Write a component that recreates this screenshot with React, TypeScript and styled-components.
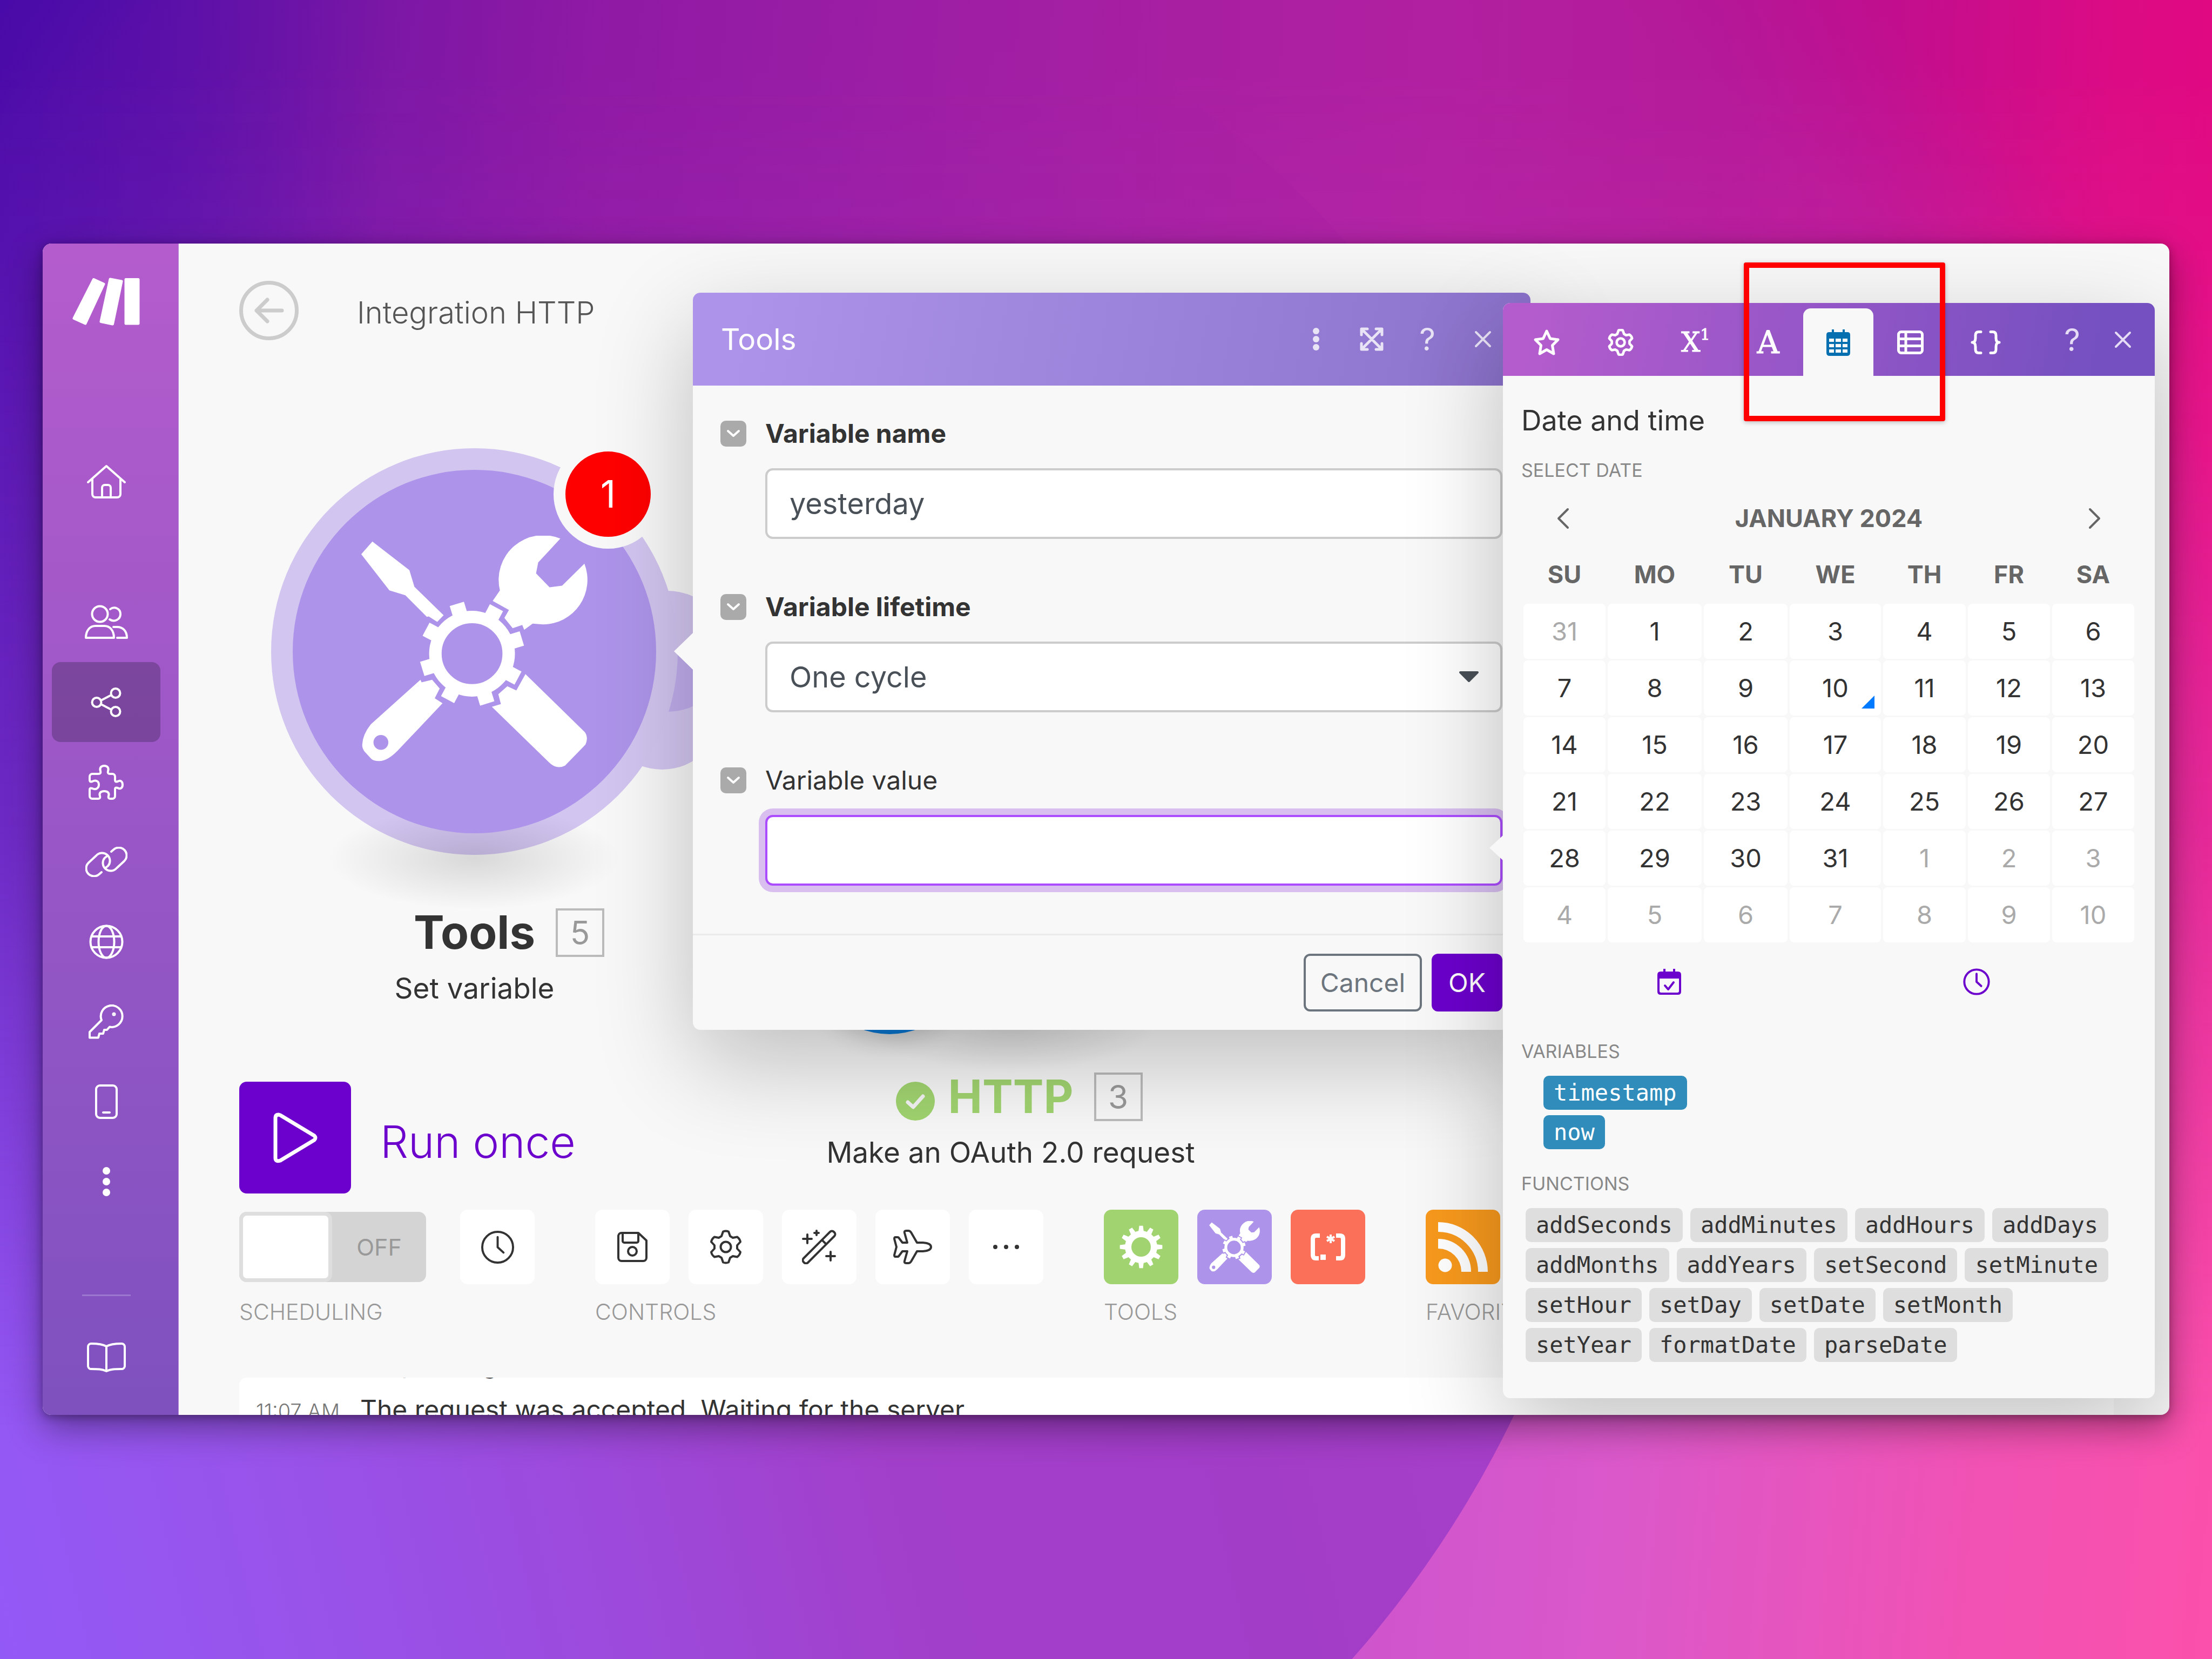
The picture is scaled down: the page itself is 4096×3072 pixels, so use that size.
import React from "react";
import styled, { createGlobalStyle, css } from "styled-components";

const sans = `Inter, "Liberation Sans", sans-serif`;
const mono = `"DejaVu Sans Mono", "Liberation Mono", monospace`;
const slab = `"DejaVu Serif", "Liberation Serif", serif`;

const color = {
  surface: "#f8f8f8",
  ink: "#333333",
  muted: "#999999",
  caption: "#888888",
  brand: "#6c00cc",
  lilac: "#ad94ea",
  line: "#cccccc",
};

const GlobalStyle = createGlobalStyle`
  *, *::before, *::after { box-sizing: border-box; }
  body { margin: 0; font-family: ${sans}; color: ${color.ink}; }
  button, input, select { font: inherit; color: inherit; margin: 0; }
  svg { display: block; flex: none; }
`;

/* ---------- page and window ---------- */

const Page = styled.div`
  position: relative;
  isolation: isolate;
  overflow: hidden;
  display: flex;
  height: 100vh;
  padding: 451px 79px 452px;
  background: linear-gradient(95deg, #c853cf 58%, #da58ca 74%, #f052b4 89%, #fb50ab 100%);

  &::before {
    content: "";
    position: absolute;
    inset: 0;
    z-index: -2;
    clip-path: circle(48.1vw at 25.1% 57.5%);
    background: linear-gradient(77deg, #9359f6 0%, #9853ea 12%, #9c4adc 24%, #a23fca 36%, #a23dc8 50%, #a83fc9 66%);
  }

  &::after {
    content: "";
    position: absolute;
    inset: 0;
    z-index: -1;
    background:
      linear-gradient(92deg, rgba(68, 9, 168, 0.7) 0%, transparent 17%),
      radial-gradient(circle at 40% 64.6%, rgba(178, 42, 168, 0.4) 0, rgba(178, 42, 168, 0.3) 58vw, transparent 66vw),
      linear-gradient(93deg, #4409a8 0%, #4a0ba8 8%, #600ea4 16%, #7f12a2 26%, #8c17a3 36%, #a31a9f 51%, #b01b9c 63%, #b51393 75%, #c00e8e 82%, #db0b84 92%, #e4077f 100%);
    mask-image: linear-gradient(#000 4%, rgba(0, 0, 0, 0.88) 20%, rgba(0, 0, 0, 0.6) 50%, transparent 86%);
  }
`;

const AppWindow = styled.div`
  position: relative;
  flex: 1;
  min-width: 0;
  display: grid;
  grid-template-columns: 252px 1fr;
  overflow: hidden;
  border-radius: 16px;
  background: ${color.surface};
  box-shadow: 0 24px 64px rgba(0, 0, 0, 0.38), 0 4px 16px rgba(0, 0, 0, 0.3);
`;

/* ---------- sidebar ---------- */

const Sidebar = styled.nav`
  display: flex;
  flex-direction: column;
  padding: 63px 33px 32px 17px;
  border-right: 1px solid #b78ad9;
  background: linear-gradient(#b45ccd, #7e51bf);
  color: #ffffff;
`;

const LogoLink = styled.a`
  align-self: flex-start;
  margin-left: 38px;
  color: #ffffff;
`;

const NavLink = styled.a<{ $active?: boolean; $before?: string }>`
  display: flex;
  align-items: center;
  justify-content: center;
  height: 148px;
  margin-top: ${(p) => p.$before ?? "0"};
  border-radius: 16px;
  color: #ffffff;
  background: ${(p) => (p.$active ? "rgba(40, 30, 60, 0.3)" : "transparent")};
`;

const NavRule = styled.hr`
  width: 90px;
  margin: auto auto 40px;
  border: 0;
  border-top: 3px solid #9d78d0;
`;

/* ---------- workspace ---------- */

const Workspace = styled.main`
  position: relative;
  min-width: 0;
  display: flex;
  flex-direction: column;
  padding: 69px 103px 0 112px;
`;

const TitleBar = styled.header`
  position: relative;
  display: flex;
  align-items: center;
  gap: 108px;
`;

const BackButton = styled.button`
  display: flex;
  align-items: center;
  justify-content: center;
  width: 110px;
  height: 110px;
  padding: 0;
  border: 7px solid ${color.line};
  border-radius: 50%;
  background: none;
  color: ${color.line};
`;

const ScenarioTitle = styled.h1`
  margin: 0;
  padding-top: 8px;
  font-size: 56px;
  line-height: 64px;
  font-weight: 300;
  color: #555555;
`;

const Canvas = styled.div`
  position: absolute;
  inset: 0;
`;

const Node = styled.section<{ $x: number; $y: number }>`
  position: absolute;
  left: ${(p) => p.$x}px;
  top: ${(p) => p.$y}px;
  width: 753px;
`;

const Bubble = styled.div<{ $ring: string }>`
  position: relative;
  display: flex;
  align-items: center;
  justify-content: center;
  height: 753px;
  border-radius: 50%;
  background: ${(p) => p.$ring};

  &::before {
    content: "";
    position: absolute;
    left: 106px;
    bottom: -101px;
    width: 540px;
    height: 190px;
    background: radial-gradient(closest-side, rgba(0, 0, 0, 0.13), rgba(0, 0, 0, 0.07) 45%, transparent);
  }
`;

const BubbleCore = styled.div<{ $tint: string }>`
  position: relative;
  display: flex;
  align-items: center;
  justify-content: center;
  width: 673px;
  height: 673px;
  border-radius: 50%;
  background: ${(p) => p.$tint};
  color: #ffffff;
`;

const Lobe = styled.span<{ $x: number; $y: number }>`
  position: absolute;
  left: ${(p) => p.$x}px;
  top: ${(p) => p.$y}px;
  width: 224px;
  height: 224px;
  border-radius: 50%;
  background: rgba(173, 148, 234, 0.5);
`;

const Counter = styled.span`
  position: absolute;
  right: 28px;
  top: -16px;
  display: flex;
  align-items: center;
  justify-content: center;
  width: 202px;
  height: 202px;
  border: 22px solid ${color.surface};
  border-radius: 50%;
  background: #ff0000;
  color: #ffffff;
  font-size: 70px;
  line-height: 84px;
`;

const SmallBubble = styled.span`
  position: absolute;
  left: 2px;
  bottom: -28px;
  width: 300px;
  height: 300px;
  border-radius: 50%;
  background: #0a78d4;
  box-shadow: 0 12px 40px rgba(0, 0, 0, 0.16);
`;

const NodeTitle = styled.div`
  display: grid;
  grid-template-columns: 1fr auto 1fr;
  align-items: center;
  margin-top: 94px;
`;

const NodeName = styled.h2<{ $done?: boolean }>`
  margin: 0;
  font-size: 85px;
  line-height: 100px;
  font-weight: 700;
  color: ${(p) => (p.$done ? "#a1d470" : color.ink)};
`;

const NodeStatus = styled.span`
  justify-self: end;
  margin: 16px 24px 0 0;
`;

const NodeNumber = styled.span`
  display: flex;
  align-items: center;
  justify-content: center;
  width: 90px;
  height: 90px;
  margin-left: 38px;
  border: 4px solid #bbbbbb;
  color: ${color.muted};
  font-size: 60px;
  line-height: 72px;
`;

const NodeCaption = styled.p`
  margin: 21px 0 0;
  text-align: center;
  font-size: 53px;
  line-height: 64px;
`;

/* ---------- bottom controls ---------- */

const Controls = styled.div`
  position: relative;
  margin-top: auto;
`;

const RunButton = styled.button`
  display: flex;
  align-items: center;
  gap: 54px;
  padding: 0;
  border: 0;
  background: none;
  color: ${color.brand};
  font-size: 82px;
  line-height: 100px;
  font-weight: 300;
`;

const RunIcon = styled.span`
  display: flex;
  align-items: center;
  justify-content: center;
  width: 207px;
  height: 207px;
  border-radius: 14px;
  background: ${color.brand};
  color: #ffffff;
`;

const RunLabel = styled.span`
  padding-top: 16px;
`;

const Toolbar = styled.div`
  display: flex;
  gap: 112px;
  margin-top: 30px;
`;

const ToolGroup = styled.div`
  display: grid;
  gap: 27px;
`;

const ToolRow = styled.div<{ $gap?: number }>`
  display: flex;
  align-items: center;
  gap: ${(p) => p.$gap ?? 35}px;
  height: 138px;
`;

const ToolCaption = styled.span`
  font-size: 41px;
  line-height: 48px;
  font-weight: 300;
  color: ${color.muted};
`;

const Tile = styled.button<{ $tint?: string }>`
  display: flex;
  align-items: center;
  justify-content: center;
  flex: none;
  width: 138px;
  height: 138px;
  padding: 0;
  border: 0;
  border-radius: 14px;
  background: ${(p) => p.$tint ?? "#ffffff"};
  color: ${(p) => (p.$tint ? "#ffffff" : color.ink)};
`;

const Switch = styled.label`
  display: flex;
  align-items: center;
  width: 346px;
  height: 130px;
  border-radius: 14px;
  background: #d4d4d4;
  color: ${color.muted};
  font-size: 43px;
  line-height: 52px;
`;

const SwitchInput = styled.input`
  appearance: none;
  width: 172px;
  height: 130px;
  border: 7px solid #dedede;
  border-radius: 14px;
  background: #ffffff;
`;

const SwitchText = styled.span`
  flex: 1;
  text-align: center;
`;

const Log = styled.ul`
  position: relative;
  height: 69px;
  margin: 98px 0 0;
  padding: 0 31px;
  overflow: hidden;
  list-style: none;
  border-radius: 14px 14px 0 0;
  background: #ffffff;
`;

const LogList = styled.div`
  display: flex;
  flex-direction: column;
  margin-top: -54px;
`;

const LogLine = styled.li`
  display: grid;
  grid-template-columns: 156px 1fr;
  align-items: baseline;
  gap: 37px;
  height: 85px;
  font-size: 48px;
  line-height: 56px;
`;

const LogTime = styled.time`
  font-size: 38px;
  font-weight: 300;
  color: #777777;
  white-space: nowrap;
`;

/* ---------- shared floating panel ---------- */

const floating = css`
  position: absolute;
  border-radius: 14px;
  background: ${color.surface};
  box-shadow: 0 60px 180px rgba(0, 0, 0, 0.24);
`;

const Pointer = styled.span<{ $top: number; $w: number; $h: number }>`
  position: absolute;
  right: 100%;
  top: ${(p) => p.$top}px;
  width: ${(p) => p.$w}px;
  height: ${(p) => p.$h}px;
  background: ${color.surface};
  clip-path: polygon(100% 0, 0 50%, 100% 100%);
`;

const IconButton = styled.button`
  display: flex;
  align-items: center;
  justify-content: center;
  width: 60px;
  height: 60px;
  padding: 0;
  border: 0;
  background: none;
  font-size: 58px;
  line-height: 60px;
  font-weight: 400;
`;

/* ---------- module dialog ---------- */

const Dialog = styled.form`
  ${floating}
  left: 1204px;
  top: 91px;
  width: 1551px;
`;

const DialogHeader = styled.header`
  display: flex;
  align-items: center;
  justify-content: space-between;
  height: 172px;
  padding: 0 58px 0 52px;
  border-radius: 14px 14px 0 0;
  background: linear-gradient(100deg, #ad94ea 5%, #8a71ca 100%);
`;

const DialogTitle = styled.h2`
  margin: 0;
  font-size: 55px;
  line-height: 64px;
  font-weight: 400;
  color: #ffffff;
`;

const DialogActions = styled.div`
  display: flex;
  gap: 43px;
  color: #e9e3f6;
`;

const DialogBody = styled.div`
  display: grid;
  gap: 96px;
  padding: 59px 52px 89px 51px;
`;

const Field = styled.div`
  display: grid;
  grid-template-columns: 48px 1fr;
  column-gap: 35px;
  row-gap: 34px;
  align-items: center;
`;

const Collapse = styled.button`
  display: flex;
  align-items: center;
  justify-content: center;
  width: 48px;
  height: 48px;
  padding: 0;
  border: 0;
  border-radius: 10px;
  background: #aaaaaa;
  color: #ffffff;
`;

const FieldLabel = styled.label<{ $strong?: boolean }>`
  font-size: 48px;
  line-height: 60px;
  font-weight: ${(p) => (p.$strong ? 700 : 400)};
`;

const control = css`
  grid-column: 2;
  width: 100%;
  height: 131px;
  padding: 0 41px;
  border: 4px solid ${color.line};
  border-radius: 14px;
  outline: 0;
  background: #ffffff;
  color: #495057;
  font-size: 54px;
  line-height: 64px;
`;

const TextInput = styled.input<{ $focused?: boolean }>`
  ${control}
  ${(p) =>
    p.$focused &&
    css`
      border-color: #ac4cff;
      box-shadow: 0 0 0 12px #d8bff0;
    `}
`;

const SelectWrap = styled.div`
  grid-column: 2;
  position: relative;
`;

const Select = styled.select`
  ${control}
  appearance: none;
`;

const SelectCaret = styled.svg`
  position: absolute;
  right: 43px;
  top: 54px;
  pointer-events: none;
`;

const DialogFooter = styled.footer`
  display: flex;
  justify-content: flex-end;
  gap: 18px;
  padding: 34px 52px;
  border-top: 3px solid #ebebeb;
`;

const ActionButton = styled.button<{ $primary?: boolean }>`
  height: 107px;
  padding: 0 27px;
  border: 4px solid ${(p) => (p.$primary ? color.brand : "#6c757d")};
  border-radius: 12px;
  background: ${(p) => (p.$primary ? color.brand : "transparent")};
  color: ${(p) => (p.$primary ? "#ffffff" : "#6c757d")};
  font-size: 48px;
  line-height: 60px;
`;

/* ---------- mapping panel ---------- */

const Panel = styled.aside`
  ${floating}
  right: 27px;
  top: 110px;
  width: 1207px;
`;

const PanelHeader = styled.header`
  display: flex;
  gap: 1px;
  height: 135px;
  padding: 0 29px 0 13px;
  border-radius: 14px 14px 0 0;
  background: linear-gradient(100deg, #b45ccd 4%, #7450c0 92%);
  color: #ffffff;
`;

const Tab = styled.button<{ $active?: boolean }>`
  display: flex;
  align-items: center;
  align-self: flex-end;
  height: 125px;
  padding: 0 43px;
  border: 0;
  border-radius: 14px 14px 0 0;
  background: ${(p) => (p.$active ? color.surface : "none")};
  color: ${(p) => (p.$active ? "#066fb0" : "#ffffff")};
`;

const SlabLetter = styled.span<{ $size: number }>`
  display: flex;
  align-items: flex-start;
  font-family: ${slab};
  font-size: ${(p) => p.$size}px;
  line-height: 60px;
  -webkit-text-stroke: 1px currentColor;
`;

const Exponent = styled.sup`
  font-size: 28px;
  line-height: 32px;
  vertical-align: baseline;
`;

const PanelActions = styled.div`
  display: flex;
  align-items: center;
  gap: 34px;
  margin-left: auto;
  color: #e6dcf5;
`;

const PanelBody = styled.div`
  padding: 51px 34px 67px;
`;

const PanelTitle = styled.h2`
  margin: 0;
  font-size: 52px;
  line-height: 64px;
  font-weight: 400;
`;

const Caption = styled.h3<{ $before: number }>`
  margin: ${(p) => p.$before}px 0 0;
  font-size: 34px;
  line-height: 44px;
  font-weight: 400;
  color: ${color.caption};
`;

const MonthBar = styled.div`
  display: flex;
  align-items: center;
  justify-content: space-between;
  height: 56px;
  margin-top: 39px;
  padding: 0 47px;
  color: #666666;
`;

const MonthName = styled.span`
  font-size: 45px;
  line-height: 56px;
  font-weight: 700;
`;

const Calendar = styled.table`
  width: 100%;
  margin-top: 22px;
  table-layout: fixed;
  border-collapse: separate;
  border-spacing: 4px 3px;
`;

const WeekDay = styled.th`
  height: 102px;
  padding: 0;
  font-size: 45px;
  line-height: 56px;
  font-weight: 700;
  color: #666666;
`;

const DayCell = styled.td<{ $today?: boolean }>`
  position: relative;
  height: 102px;
  padding: 0;
  border-radius: 8px;
  background: #ffffff;
  ${(p) =>
    p.$today &&
    css`
      &::after {
        content: "";
        position: absolute;
        right: 12px;
        bottom: 13px;
        width: 24px;
        height: 24px;
        background: #007bff;
        clip-path: polygon(100% 0, 100% 100%, 0 100%);
      }
    `}
`;

const Day = styled.button<{ $outside?: boolean }>`
  display: block;
  width: 100%;
  height: 102px;
  padding: 0;
  border: 0;
  background: none;
  font-size: 47px;
  line-height: 56px;
  color: ${(p) => (p.$outside ? "#aaaaaa" : color.ink)};
`;

const QuickPicks = styled.div`
  display: grid;
  grid-template-columns: 1fr 1fr;
  justify-items: center;
  margin: 40px 11px 0 -11px;
  color: ${color.brand};
`;

const VariableList = styled.div`
  display: flex;
  flex-direction: column;
  align-items: flex-start;
  gap: 10px;
  margin-top: 23px;
  padding-left: 41px;
`;

const FunctionList = styled.div`
  display: flex;
  flex-wrap: wrap;
  gap: 11px 14px;
  margin-top: 23px;
  padding: 0 24px 0 8px;
`;

const Chip = styled.button<{ $variable?: boolean }>`
  height: 63px;
  padding: 0 19px;
  border: 0;
  border-radius: 10px;
  background: ${(p) => (p.$variable ? "#2f8cbb" : "#dedede")};
  color: ${(p) => (p.$variable ? "#ffffff" : color.ink)};
  font-family: ${mono};
  font-size: 42px;
  line-height: 52px;
`;

const Highlight = styled.div`
  position: absolute;
  right: 415px;
  top: 35px;
  width: 373px;
  height: 294px;
  border: 10px solid #ff0000;
  border-radius: 4px;
  box-shadow: 0 2px 8px rgba(0, 0, 0, 0.25);
  pointer-events: none;
`;

/* ---------- icons ---------- */

type IconProps = {
  w: number;
  h: number;
  stroke?: number;
  width?: number;
  height?: number;
  children: React.ReactNode;
};

const Line = ({ w, h, stroke = 4, width, height, children }: IconProps) => (
  <svg
    width={width ?? w}
    height={height ?? h}
    viewBox={`0 0 ${w} ${h}`}
    fill="none"
    stroke="currentColor"
    strokeWidth={stroke}
    strokeLinecap="round"
    strokeLinejoin="round"
    aria-hidden="true"
  >
    {children}
  </svg>
);

const gearPath = (teeth: number, outer: number, inner: number, top: number, base: number, c: number) => {
  const step = 360 / teeth;
  const at = (r: number, deg: number) => {
    const a = ((deg - 90) * Math.PI) / 180;
    return `${(c + r * Math.cos(a)).toFixed(2)} ${(c + r * Math.sin(a)).toFixed(2)}`;
  };
  const points: string[] = [];
  for (let i = 0; i < teeth; i += 1) {
    const mid = i * step;
    points.push(at(inner, mid - base), at(outer, mid - top), at(outer, mid + top), at(inner, mid + base));
  }
  return `M${points.join("L")}Z`;
};

const Logo = () => (
  <svg width="125" height="89" viewBox="0 0 125 89" fill="currentColor" stroke="currentColor" strokeWidth="5" strokeLinejoin="round" aria-hidden="true">
    <path d="M39.500 3.500L58 12L24 85L3 75.500Z" />
    <path d="M70 3L91 7L74.500 86L53 81.500Z" />
    <path d="M99 3.500H122V85H99Z" />
  </svg>
);

const HomeIcon = () => (
  <Line w={72} h={64}>
    <path d="M2 33L36 3L70 33M10 26V55a6 6 0 0 0 6 6H56a6 6 0 0 0 6-6V26M28 61V43a5 5 0 0 1 5-5h6a5 5 0 0 1 5 5V61" />
  </Line>
);

const PeopleIcon = () => (
  <Line w={80} h={64}>
    <circle cx="28" cy="17" r="14.500" />
    <path d="M2 61c0-14 8-22 18-22h16c10 0 18 8 18 22z" />
    <path d="M47 8c8-6 19-1 19 9s-11 16-20 10M53 41h7c10 0 18 7 18 20H60" />
  </Line>
);

const ShareIcon = () => (
  <Line w={57} h={55}>
    <circle cx="11" cy="27.500" r="8.500" />
    <circle cx="46" cy="10.500" r="8.500" />
    <circle cx="46" cy="44.500" r="8.500" />
    <path d="M19 24L38 14M19 31L38 41" />
  </Line>
);

const PuzzleIcon = () => (
  <Line w={65} h={65}>
    <path d="M7 17H18c4 0 5-2 4-5-2-6 1-10 7-10s9 4 7 10c-1 3 0 5 4 5h4a5 5 0 0 1 5 5v6c0 4 2 4 5 3 5-3 9 0 9 6s-4 9-9 6c-3-1-5-1-5 3V58a5 5 0 0 1-5 5H40c-3 0-4-2-3-5 2-6-2-9-8-9s-10 3-8 9c1 3 0 5-3 5H7a5 5 0 0 1-5-5V47c0-4 2-4 5-3 6 3 12 0 12-7s-6-9-12-6c-3 1-5 1-5-3V22a5 5 0 0 1 5-5z" />
  </Line>
);

const LinkIcon = () => (
  <Line w={78} h={56}>
    <path d="M30 47l-4 3.500a14.500 14.500 0 0 1-20-21l14-13a14.500 14.500 0 0 1 22 19l-4 3" />
    <path transform="rotate(180 39 28)" d="M30 47l-4 3.500a14.500 14.500 0 0 1-20-21l14-13a14.500 14.500 0 0 1 22 19l-4 3" />
  </Line>
);

const GlobeIcon = () => (
  <Line w={64} h={64}>
    <circle cx="32" cy="32" r="29.500" />
    <ellipse cx="32" cy="32" rx="14.500" ry="29.500" />
    <path d="M5 22H59M5 42H59" />
  </Line>
);

const KeyIcon = () => (
  <Line w={65} h={64}>
    <path d="M24 29L2 51V61.500H18L20 54H27L29 47H34L39 41.500A20 20 0 1 0 24 29z" />
    <circle cx="47" cy="18" r="1.500" />
  </Line>
);

const PhoneIcon = () => (
  <Line w={42} h={64}>
    <rect x="2" y="2" width="38" height="60" rx="7" />
    <path d="M15 52H27" />
  </Line>
);

const Kebab = ({ r, pitch }: { r: number; pitch: number }) => (
  <svg width={r * 2} height={r * 2 + pitch * 2} fill="currentColor" aria-hidden="true">
    {[0, 1, 2].map((i) => (
      <circle key={i} cx={r} cy={r + i * pitch} r={r} />
    ))}
  </svg>
);

const BookIcon = () => (
  <Line w={72} h={56}>
    <path d="M36 7C29 3 18 2 8 2a6 6 0 0 0-6 6V44a6 6 0 0 0 6 5c11 0 20 0 28 4 8-4 17-4 28-4a6 6 0 0 0 6-5V8a6 6 0 0 0-6-6C54 2 43 3 36 7zM36 7V53" />
  </Line>
);

const ToolsIcon = ({ size }: { size: number }) => (
  <svg width={size} height={size} viewBox="194 186 436 436" fill="currentColor" aria-hidden="true">
    <path d="M220 197L289.600 250.700L299 282L354 335.700L342 348L326 338L322.500 338.600L282 298L252 289L199 220.700Z" />
    <path d="M573.700 191.400L532 236.400L528 257L553.400 283L577 280L619 238.600A84 84 0 0 1 541 353L521.600 351.400L505.700 363L502 354L484 360L468.400 340.700L477 325.700L446.400 308.600L460 289A84 84 0 0 1 573.700 191.400Z" />
    <path
      fillRule="evenodd"
      d="M310.400 457L312.600 462L332.400 457L346.600 473.600L337.300 492L352 501.400L267 591Q248 610 233 610Q222 610 218 606L206 593Q200 586 201 578Q202 560 217 541ZM250 575a14 14 0 1 0-28 0a14 14 0 1 0 28 0Z"
    />
    <path d="M508 446.400L619.800 555.700Q627 566 621 579L582.500 618.600Q568 626 555 615L444.800 507.900L461.800 502.900L457 484.300L473.900 469.300L490.900 477.100Z" />
    <circle cx="407.500" cy="408" r="69" fill="none" stroke="currentColor" strokeWidth="23.500" />
    {Array.from({ length: 8 }, (_, i) => (
      <rect key={i} x="393.500" y="310" width="28" height="26" transform={`rotate(${i * 45 - 17} 407.500 408)`} />
    ))}
  </svg>
);

const ClockIcon = ({ size, stroke }: { size: number; stroke: number }) => (
  <Line w={64} h={64} width={size} height={size} stroke={stroke}>
    <circle cx="32" cy="32" r="29" />
    <path d="M32 13V32L43 42" />
  </Line>
);

const SaveIcon = () => (
  <Line w={56} h={56}>
    <path d="M2 8a6 6 0 0 1 6-6H39L54 16V48a6 6 0 0 1-6 6H8a6 6 0 0 1-6-6z" />
    <path d="M10 3V17a3 3 0 0 0 3 3H36a3 3 0 0 0 3-3V3" />
    <circle cx="28" cy="36" r="8" />
  </Line>
);

const GearIcon = ({ size, stroke }: { size: number; stroke: number }) => (
  <Line w={64} h={64} width={size} height={size} stroke={stroke}>
    <path d="M27 3.500Q32 1.500 37 3.500L40 12L45 15L53 13.500Q58 17 59 22.500L53 29V35L59 41.500Q58 47 53 50.500L45 49L40 52L37 60.500Q32 62.500 27 60.500L24 52L19 49L11 50.500Q6 47 5 41.500L11 35V29L5 22.500Q6 17 11 13.500L19 15L24 12Z" />
    <circle cx="32" cy="32" r="9.500" />
  </Line>
);

const WandIcon = () => (
  <Line w={64} h={64}>
    <path d="M3 53L52 4a5 5 0 0 1 7 0l1 1a5 5 0 0 1 0 7L11 61a5 5 0 0 1-7 0l-1-1a5 5 0 0 1 0-7zM37 19L45 27M10 9V25M2 17H18M27 2V10M23 6H31M53 41V57M45 49H61" />
  </Line>
);

const PlaneIcon = () => (
  <Line w={72} h={64}>
    <path d="M4 14H8Q10 14 11 16L17 24H26L21 6Q20 2 24 2H28Q31 2 33 5L44 24H55Q70 25 70 32Q70 39 55 40H44L33 59Q31 62 28 62H24Q20 62 21 58L26 40H17L11 48Q10 50 8 50H4Q2 50 2 47L6 32L2 17Q2 14 4 14Z" />
  </Line>
);

const MoreIcon = () => (
  <svg width="50" height="10" fill="currentColor" aria-hidden="true">
    <circle cx="5" cy="5" r="4" />
    <circle cx="25" cy="5" r="4" />
    <circle cx="45" cy="5" r="4" />
  </svg>
);

const SolidGear = () => (
  <svg width="80" height="80" viewBox="0 0 80 80" fill="currentColor" aria-hidden="true">
    <path fillRule="evenodd" d={`${gearPath(12, 39.5, 30, 5, 9, 40)}M58 40a18 18 0 1 0-36 0a18 18 0 1 0 36 0Z`} />
  </svg>
);

const RegexIcon = () => (
  <svg width="64" height="50" viewBox="0 0 64 50" fill="none" stroke="currentColor" strokeWidth="8" strokeLinejoin="round" aria-hidden="true">
    <path d="M17 4H10Q4 4 4 10V40Q4 46 10 46H15M47 4H54Q60 4 60 10V40Q60 46 54 46H47" />
    <path d="M18 44H28" strokeWidth="10" />
    <path d="M37 2V18M30 6L44 14M44 6L30 14" strokeWidth="4" />
  </svg>
);

const RssIcon = () => (
  <svg width="92" height="94" viewBox="0 0 92 94" fill="none" stroke="currentColor" strokeWidth="18" aria-hidden="true">
    <circle cx="13" cy="81" r="12.500" fill="currentColor" stroke="none" />
    <path d="M0 41A52 52 0 0 1 52 93M0 10A83 83 0 0 1 83 93" />
  </svg>
);

const CloseIcon = () => (
  <Line w={32} h={32}>
    <path d="M3 3L29 29M29 3L3 29" />
  </Line>
);

const ExpandIcon = () => (
  <Line w={44} h={44} stroke={5}>
    <path d="M3 14V3H14M30 3H41V14M41 30V41H30M14 41H3V30M4 4L40 40M40 4L4 40" />
  </Line>
);

const StarIcon = () => (
  <Line w={50} h={50} stroke={5}>
    <path d="M25 4L31.500 18L46 20L35.500 30.500L38 46L25 38.500L12 46L14.500 30.500L4 20L18.500 18Z" />
  </Line>
);

const CalendarIcon = () => (
  <svg width="44" height="50" viewBox="0 0 44 50" fill="currentColor" aria-hidden="true">
    <path
      fillRule="evenodd"
      d="M10 1h4v5h16V1h4v5h5q5 0 5 5V44q0 6-6 6H6q-6 0-6-6V11q0-5 5-5h5ZM5 18v6h9v-6ZM17 18v6h10v-6ZM30 18v6h9v-6ZM5 28v6h9v-6ZM17 28v6h10v-6ZM30 28v6h9v-6ZM5 38v6h9v-6ZM17 38v6h10v-6ZM30 38v6h9v-6Z"
    />
  </svg>
);

const TableIcon = () => (
  <Line w={49} h={44} stroke={5}>
    <rect x="2.500" y="2.500" width="44" height="39" rx="5" />
    <path d="M16 3V41M3 15.500H46M3 28.500H46" />
  </Line>
);

const BracesIcon = () => (
  <Line w={56} h={44} stroke={5}>
    <path d="M19 2.500H15Q9 2.500 9 9V14Q9 22 3 22Q9 22 9 30V35Q9 41.500 15 41.500H19M37 2.500H41Q47 2.500 47 9V14Q47 22 53 22Q47 22 47 30V35Q47 41.500 41 41.500H37" />
  </Line>
);

const CalendarCheckIcon = () => (
  <svg width="44" height="50" viewBox="0 0 44 50" aria-hidden="true">
    <path fill="currentColor" fillRule="evenodd" d="M11 1h4v5h14V1h4v5h5q6 0 6 6V43q0 6-6 6H6q-6 0-6-6V12q0-6 6-6h5ZM4 19V42q0 3 3 3H37q3 0 3-3V19Z" />
    <path d="M14 32L20 39L30 26" fill="none" stroke="currentColor" strokeWidth="4" strokeLinecap="round" strokeLinejoin="round" />
  </svg>
);

/* ---------- data ---------- */

const navItems = [
  { label: "Home", icon: <HomeIcon />, before: "215px" },
  { label: "Team", icon: <PeopleIcon />, before: "112px" },
  { label: "Scenarios", icon: <ShareIcon />, active: true },
  { label: "Templates", icon: <PuzzleIcon /> },
  { label: "Connections", icon: <LinkIcon /> },
  { label: "Webhooks", icon: <GlobeIcon /> },
  { label: "Keys", icon: <KeyIcon /> },
  { label: "Devices", icon: <PhoneIcon /> },
  { label: "More", icon: <Kebab r={7} pitch={20} /> },
];

const weekDays = ["SU", "MO", "TU", "WE", "TH", "FR", "SA"];
const columnWidths = [152, 174, 155, 169, 153, 152, 152];

const weeks = Array.from({ length: 6 }, (_, row) =>
  Array.from({ length: 7 }, (_, col) => {
    const n = row * 7 + col;
    if (n === 0) return { day: 31, outside: true };
    return n > 31 ? { day: n - 31, outside: true } : { day: n, outside: false };
  }),
);

const functionNames = [
  "addSeconds", "addMinutes", "addHours", "addDays", "addMonths", "addYears", "setSecond", "setMinute",
  "setHour", "setDay", "setDate", "setMonth", "setYear", "formatDate", "parseDate",
];

/* ---------- sections ---------- */

const SideNavigation = () => (
  <Sidebar>
    <LogoLink href="#" aria-label="Make"><Logo /></LogoLink>
    {navItems.map((item) => (
      <NavLink key={item.label} href="#" aria-label={item.label} $active={item.active} $before={item.before}>
        {item.icon}
      </NavLink>
    ))}
    <NavRule />
    <NavLink href="#" aria-label="Help"><BookIcon /></NavLink>
  </Sidebar>
);

const ScenarioCanvas = () => (
  <Canvas>
    <Lobe $x={793} $y={643} />
    <Lobe $x={783} $y={750} />
    <Node $x={171} $y={379}>
      <Bubble $ring="#d2c5f0">
        <BubbleCore $tint={color.lilac}><ToolsIcon size={429} /></BubbleCore>
        <Counter>1</Counter>
      </Bubble>
      <NodeTitle>
        <span />
        <NodeName>Tools</NodeName>
        <NodeNumber>5</NodeNumber>
      </NodeTitle>
      <NodeCaption>Set variable</NodeCaption>
    </Node>
    <Node $x={1164} $y={683}>
      <Bubble $ring="#a9cdec">
        <BubbleCore $tint="#0a78d4" />
        <SmallBubble />
      </Bubble>
      <NodeTitle>
        <NodeStatus>
          <svg width="72" height="72" viewBox="0 0 72 72" aria-hidden="true">
            <circle cx="36" cy="36" r="36" fill="#a1d470" />
            <path d="M22 38L32 47L50 27" fill="none" stroke="#f4f4f4" strokeWidth="7" strokeLinecap="round" strokeLinejoin="round" />
          </svg>
        </NodeStatus>
        <NodeName $done>HTTP</NodeName>
        <NodeNumber>3</NodeNumber>
      </NodeTitle>
      <NodeCaption>Make an OAuth 2.0 request</NodeCaption>
    </Node>
  </Canvas>
);

const BottomControls = () => (
  <Controls>
    <RunButton type="button">
      <RunIcon>
        <Line w={82} h={94} stroke={7}>
          <path d="M4 10Q4 4 10 4L13 5L76 43Q80 47 76 51L13 89Q4 92 4 84Z" />
        </Line>
      </RunIcon>
      <RunLabel>Run once</RunLabel>
    </RunButton>
    <Toolbar>
      <ToolGroup>
        <ToolRow $gap={63}>
          <Switch>
            <SwitchInput type="checkbox" role="switch" />
            <SwitchText>OFF</SwitchText>
          </Switch>
          <Tile type="button" aria-label="Schedule"><ClockIcon size={63} stroke={4} /></Tile>
        </ToolRow>
        <ToolCaption>SCHEDULING</ToolCaption>
      </ToolGroup>
      <ToolGroup>
        <ToolRow>
          <Tile type="button" aria-label="Save"><SaveIcon /></Tile>
          <Tile type="button" aria-label="Settings"><GearIcon size={64} stroke={4} /></Tile>
          <Tile type="button" aria-label="Align"><WandIcon /></Tile>
          <Tile type="button" aria-label="Explain flow"><PlaneIcon /></Tile>
          <Tile type="button" aria-label="More"><MoreIcon /></Tile>
        </ToolRow>
        <ToolCaption>CONTROLS</ToolCaption>
      </ToolGroup>
      <ToolGroup>
        <ToolRow>
          <Tile type="button" aria-label="Flow control" $tint="#a1d470"><SolidGear /></Tile>
          <Tile type="button" aria-label="Tools" $tint={color.lilac}><ToolsIcon size={96} /></Tile>
          <Tile type="button" aria-label="Text parser" $tint="#fb7058"><RegexIcon /></Tile>
        </ToolRow>
        <ToolCaption>TOOLS</ToolCaption>
      </ToolGroup>
      <ToolGroup>
        <ToolRow>
          <Tile type="button" aria-label="RSS" $tint="#f8991d"><RssIcon /></Tile>
        </ToolRow>
        <ToolCaption>FAVORITES</ToolCaption>
      </ToolGroup>
    </Toolbar>
    <Log>
      <LogList>
        <LogLine>
          <span />
          <span>Requesting</span>
        </LogLine>
        <LogLine>
          <LogTime>11:07 AM</LogTime>
          <span>The request was accepted. Waiting for the server.</span>
        </LogLine>
      </LogList>
    </Log>
  </Controls>
);

const CollapseButton = () => (
  <Collapse type="button" aria-label="Field options">
    <Line w={26} h={16}>
      <path d="M3 3L13 12L23 3" />
    </Line>
  </Collapse>
);

const ModuleDialog = () => (
  <Dialog>
    <Pointer $top={630} $w={35} $h={68} />
    <DialogHeader>
      <DialogTitle>Tools</DialogTitle>
      <DialogActions>
        <IconButton type="button" aria-label="Menu"><Kebab r={6} pitch={15} /></IconButton>
        <IconButton type="button" aria-label="Expand"><ExpandIcon /></IconButton>
        <IconButton type="button">?</IconButton>
        <IconButton type="button" aria-label="Close"><CloseIcon /></IconButton>
      </DialogActions>
    </DialogHeader>
    <DialogBody>
      <Field>
        <CollapseButton />
        <FieldLabel htmlFor="variable-name" $strong>Variable name</FieldLabel>
        <TextInput id="variable-name" defaultValue="yesterday" />
      </Field>
      <Field>
        <CollapseButton />
        <FieldLabel htmlFor="variable-lifetime" $strong>Variable lifetime</FieldLabel>
        <SelectWrap>
          <Select id="variable-lifetime" defaultValue="cycle">
            <option value="cycle">One cycle</option>
          </Select>
          <SelectCaret width="38" height="22" viewBox="0 0 38 22" fill="#495057" stroke="#495057" strokeWidth="4" strokeLinejoin="round" aria-hidden="true">
            <path d="M3 3H35L19 19Z" />
          </SelectCaret>
        </SelectWrap>
      </Field>
      <Field>
        <CollapseButton />
        <FieldLabel htmlFor="variable-value">Variable value</FieldLabel>
        <TextInput id="variable-value" $focused />
      </Field>
    </DialogBody>
    <DialogFooter>
      <ActionButton type="button">Cancel</ActionButton>
      <ActionButton type="button" $primary>OK</ActionButton>
    </DialogFooter>
  </Dialog>
);

const MappingPanel = () => (
  <Panel>
    <Pointer $top={986} $w={25} $h={46} />
    <PanelHeader>
      <Tab type="button" aria-label="Favorites"><StarIcon /></Tab>
      <Tab type="button" aria-label="General functions"><GearIcon size={50} stroke={6} /></Tab>
      <Tab type="button" aria-label="Math functions">
        <SlabLetter $size={50}>X<Exponent>1</Exponent></SlabLetter>
      </Tab>
      <Tab type="button" aria-label="Text functions"><SlabLetter $size={57}>A</SlabLetter></Tab>
      <Tab type="button" aria-label="Date and time" $active><CalendarIcon /></Tab>
      <Tab type="button" aria-label="Array functions"><TableIcon /></Tab>
      <Tab type="button" aria-label="Custom functions"><BracesIcon /></Tab>
      <PanelActions>
        <IconButton type="button">?</IconButton>
        <IconButton type="button" aria-label="Close"><CloseIcon /></IconButton>
      </PanelActions>
    </PanelHeader>
    <PanelBody>
      <PanelTitle>Date and time</PanelTitle>
      <Caption $before={38}>SELECT DATE</Caption>
      <MonthBar>
        <IconButton type="button" aria-label="Previous month">
          <Line w={24} h={40}><path d="M21 3L4 20L21 37" /></Line>
        </IconButton>
        <MonthName>JANUARY 2024</MonthName>
        <IconButton type="button" aria-label="Next month">
          <Line w={24} h={40}><path d="M3 3L20 20L3 37" /></Line>
        </IconButton>
      </MonthBar>
      <Calendar>
        <colgroup>
          {columnWidths.map((width, i) => (
            <col key={i} style={{ width }} />
          ))}
        </colgroup>
        <thead>
          <tr>
            {weekDays.map((name) => (
              <WeekDay key={name} scope="col">{name}</WeekDay>
            ))}
          </tr>
        </thead>
        <tbody>
          {weeks.map((week, row) => (
            <tr key={row}>
              {week.map(({ day, outside }) => (
                <DayCell key={day} $today={day === 10 && !outside}>
                  <Day type="button" $outside={outside}>{day}</Day>
                </DayCell>
              ))}
            </tr>
          ))}
        </tbody>
      </Calendar>
      <QuickPicks>
        <IconButton type="button" aria-label="Today"><CalendarCheckIcon /></IconButton>
        <IconButton type="button" aria-label="Set time"><ClockIcon size={50} stroke={5} /></IconButton>
      </QuickPicks>
      <Caption $before={77}>VARIABLES</Caption>
      <VariableList>
        <Chip type="button" $variable>timestamp</Chip>
        <Chip type="button" $variable>now</Chip>
      </VariableList>
      <Caption $before={42}>FUNCTIONS</Caption>
      <FunctionList>
        {functionNames.map((name) => (
          <Chip key={name} type="button">{name}</Chip>
        ))}
      </FunctionList>
    </PanelBody>
  </Panel>
);

export default function App() {
  return (
    <>
      <GlobalStyle />
      <Page>
        <AppWindow>
          <SideNavigation />
          <Workspace>
            <ScenarioCanvas />
            <TitleBar>
              <BackButton type="button" aria-label="Back">
                <Line w={56} h={48} stroke={7}>
                  <path d="M52 24H5M25 4L5 24L25 44" />
                </Line>
              </BackButton>
              <ScenarioTitle>Integration HTTP</ScenarioTitle>
            </TitleBar>
            <BottomControls />
          </Workspace>
          <ModuleDialog />
          <MappingPanel />
          <Highlight />
        </AppWindow>
      </Page>
    </>
  );
}
